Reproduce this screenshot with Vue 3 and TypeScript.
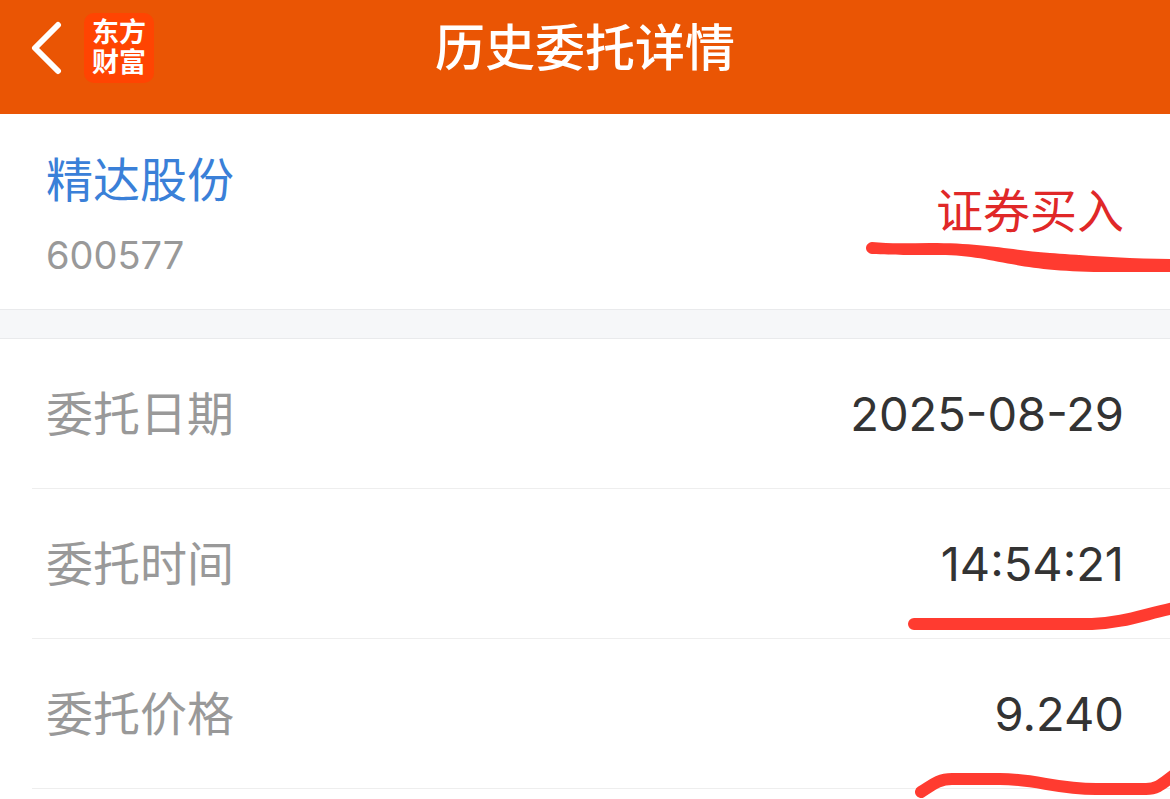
<script setup lang="ts">
interface Detail {
  label: string
  value: string
  ink?: string
}

const details: Detail[] = [
  { label: '委托日期', value: '2025-08-29' },
  { label: '委托时间', value: '14:54:21', ink: 'M54 24H232C262 23 282 15 314 8' },
  { label: '委托价格', value: '9.240', ink: 'M61 23C71 17 78 10 92 10H140C176 10 196 20 236 20H286C298 20 303 14 314 6' },
]
</script>

<template>
  <main class="page">
    <header class="bar">
      <div class="side">
        <button class="back" type="button" aria-label="返回">
          <svg width="32" height="54" viewBox="0 0 32 54" aria-hidden="true">
            <path d="M28 4L5 27L28 50" />
          </svg>
        </button>
        <div class="logo"><span>东方</span><span>财富</span></div>
      </div>
      <h1 class="title">历史委托详情</h1>
      <div class="side"></div>
    </header>

    <section class="summary">
      <div class="stock">
        <a class="name" href="#">精达股份</a>
        <span class="code">600577</span>
      </div>
      <strong class="action">证券买入</strong>
      <svg class="ink" width="310" height="40" viewBox="0 0 310 40" aria-hidden="true">
        <path
          class="brush"
          d="M12 2C30 4 50 3 70 3C125 3 150 10 190 13C220 15 270 19 310 19V32H250C150 32 135 15 80 15C50 15 35 15 12 14C4 13 4 3 12 2Z"
        />
      </svg>
    </section>

    <dl class="details">
      <div v-for="item in details" :key="item.label" class="row">
        <dt>{{ item.label }}</dt>
        <dd>{{ item.value }}</dd>
        <svg v-if="item.ink" class="ink" width="310" height="30" viewBox="0 0 310 30" aria-hidden="true">
          <path class="pen" :d="item.ink" />
        </svg>
      </div>
    </dl>
  </main>
</template>

<style>
body {
  margin: 0;
  background: #fff;
}
</style>

<style scoped>
.page {
  font-family: Inter, "Noto Sans CJK SC", sans-serif;
  color: #333;
  background: #fff;
  overflow: hidden;
}

.bar {
  display: flex;
  align-items: center;
  box-sizing: border-box;
  height: 114px;
  padding: 0 30px 18px;
  background: #ea5504;
  color: #fff;
}

.side {
  display: flex;
  flex: 1;
  align-items: center;
  gap: 22px;
}

.back {
  display: flex;
  padding: 0;
  border: 0;
  background: none;
  cursor: pointer;
}

.back path {
  fill: none;
  stroke: #fff;
  stroke-width: 6;
  stroke-linecap: round;
  stroke-linejoin: round;
}

.logo {
  display: flex;
  flex-direction: column;
  align-items: center;
  justify-content: center;
  width: 70px;
  height: 70px;
  border-radius: 10px;
  background: #ff4402;
  font-size: 27px;
  font-weight: 700;
  line-height: 30px;
}

.title {
  margin: 0;
  font-size: 50px;
  font-weight: 500;
  line-height: 60px;
}

.summary {
  position: relative;
  display: flex;
  align-items: center;
  justify-content: space-between;
  padding: 34px 46px 30px;
}

.stock {
  display: flex;
  flex-direction: column;
  gap: 19px;
}

.name {
  color: #3a80d8;
  font-size: 47px;
  line-height: 64px;
  text-decoration: none;
}

.code {
  color: #999;
  font-size: 38px;
  line-height: 48px;
}

.action {
  padding-bottom: 6px;
  color: #e02828;
  font-size: 47px;
  font-weight: 400;
  line-height: 64px;
}

.details {
  margin: 0;
  padding-bottom: 10px;
}

.details::before {
  content: "";
  display: block;
  height: 28px;
  border: solid #e9eaec;
  border-width: 1px 0;
  background: #f6f7f9;
}

.row {
  position: relative;
  display: flex;
  align-items: center;
  justify-content: space-between;
  box-sizing: border-box;
  height: 150px;
  margin-left: 32px;
  padding: 0 46px 0 14px;
  border-bottom: 1px solid #eee;
}

dt {
  color: #999;
  font-size: 47px;
  line-height: 64px;
}

dd {
  margin: 0;
  font-size: 47px;
  line-height: 64px;
}

.ink {
  position: absolute;
  right: 0;
  pointer-events: none;
}

.summary .ink {
  bottom: 29px;
}

.row .ink {
  bottom: -11px;
}

.row:nth-child(2) .ink {
  bottom: 8px;
}

.brush {
  fill: #ff3b30;
}

.pen {
  fill: none;
  stroke: #ff3b30;
  stroke-width: 12;
  stroke-linecap: round;
  stroke-linejoin: round;
}
</style>
